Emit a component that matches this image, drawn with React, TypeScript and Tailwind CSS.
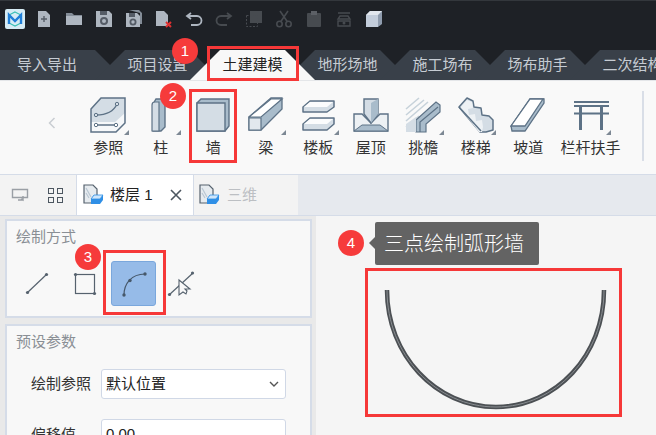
import React from "react";

const FONT = "font-['Liberation_Sans','Noto_Sans_CJK_SC',sans-serif]";

function Ico({ children, size = 18, vb = 18 }: { children: React.ReactNode; size?: number; vb?: number }) {
  return (
    <svg width={size} height={size} viewBox={`0 0 ${vb} ${vb}`} fill="none" className="shrink-0">
      {children}
    </svg>
  );
}

const c = "#aeb6c0";
const dim = "#474b50";

const toolbar: React.ReactNode[] = [
  <Ico key="n"><path d="M3 1h8l4 4v12H3z" fill={c} /><path d="M9 6v6M6 9h6" stroke="#555c66" strokeWidth="1.4" /></Ico>,
  <Ico key="o"><path d="M1 15V3h6l2 2h8v10z" fill="#838c97" /><path d="M1 15V6h16v9z" fill={c} /></Ico>,
  <Ico key="s"><path d="M1 1h13l3 3v13H1z" fill={c} /><rect x="5" y="1" width="7" height="4" fill="#555c66" /><circle cx="9" cy="11" r="3" stroke="#555c66" strokeWidth="2" /></Ico>,
  <Ico key="a"><path d="M4 0h10l3 3v11h-2V3z" fill="#838c97" /><path d="M1 3h11l3 3v11H1z" fill={c} /><rect x="4" y="3" width="6" height="4" fill="#555c66" /><circle cx="8" cy="12" r="2.6" stroke="#555c66" strokeWidth="1.8" /></Ico>,
  <Ico key="c"><path d="M1 1h8l4 4v11H1z" fill={c} /><path d="M11 12l5 5M16 12l-5 5" stroke="#e03030" strokeWidth="2" /></Ico>,
  <Ico key="u"><path d="M6 3L2 6l4 3" stroke={c} strokeWidth="1.8" /><path d="M3 6h9a4 4 0 010 9H6" stroke={c} strokeWidth="1.8" /></Ico>,
  <Ico key="r"><path d="M12 3l4 3-4 3" stroke={dim} strokeWidth="1.8" /><path d="M15 6H6a4 4 0 000 9h6" stroke={dim} strokeWidth="1.8" /></Ico>,
  <Ico key="l"><rect x="5" y="1" width="12" height="12" fill={dim} /><rect x="1.5" y="5.5" width="11" height="11" stroke={dim} strokeDasharray="2 1.5" /></Ico>,
  <Ico key="x"><circle cx="4.5" cy="14" r="2.7" stroke={dim} strokeWidth="1.6" /><circle cx="13.5" cy="14" r="2.7" stroke={dim} strokeWidth="1.6" /><path d="M5.5 12L13 1M12.5 12L5 1" stroke={dim} strokeWidth="1.6" /></Ico>,
  <Ico key="p"><rect x="2" y="3" width="14" height="14" rx="1" fill={dim} /><rect x="6" y="1" width="6" height="4" fill="#5c6066" /></Ico>,
  <Ico key="b"><path d="M3 3h12M5 6h8l2 3H3zM3 11h12v5H3z" stroke={dim} strokeWidth="1.4" /><circle cx="9" cy="13" r="1.5" fill={dim} /></Ico>,
  <Ico key="q"><path d="M1 5l4-4h12v13l-4 3H1z" fill="#8f9cae" /><path d="M1 5h12v12H1z" fill="#c3cddb" /><path d="M5 1h12l-4 4H1z" fill="#e2e7ee" /></Ico>,
];

const topTabs = ["项目设置", "土建建模", "地形场地", "施工场布", "场布助手", "二次结构"];

function Tab({ label, active, z }: { label: string; active?: boolean; z: number }) {
  return (
    <div
      style={{ zIndex: z }}
      className={`relative -ml-[30px] h-[30px] w-[125px] shrink-0 flex items-center justify-center text-[15px] [clip-path:polygon(30px_0,95px_0,125px_100%,0_100%)] ${
        active ? "bg-[#f8f8f8] text-[#222]" : "bg-[#394049] text-[#c6ccd3]"
      }`}
    >
      {label}
    </div>
  );
}

const S = "#5d7286";
const L = "#d4dde5";
const D = "#a9bccb";
const ribbon: { label: string; w?: string; arrow?: boolean; icon: React.ReactNode }[] = [
  {
    label: "参照",
    arrow: true,
    icon: (
      <Ico size={36} vb={36}>
        <path d="M1 12L11 1h24v25l-9 9H1z" fill={L} />
        <path d="M1 25h24l10-9v10l-9 9H1z" fill="#f6f8fa" />
        <path d="M6 18c8 0 17-2 21-11M6 28h20" stroke={S} strokeWidth="1.3" />
        <circle cx="6" cy="18" r="1.7" fill={L} stroke={S} /><circle cx="27" cy="7" r="1.7" fill={L} stroke={S} />
        <circle cx="6" cy="28" r="1.7" fill="#fff" stroke={S} /><circle cx="26" cy="28" r="1.7" fill="#fff" stroke={S} />
        <path d="M1 12L11 1h24v25l-9 9H1z" stroke={S} strokeWidth="1.5" />
      </Ico>
    ),
  },
  {
    label: "柱",
    arrow: true,
    icon: (
      <Ico size={36} vb={36}>
        <path d="M10 7l3-5h9v28l-4 4h-8z" fill={D} stroke={S} strokeWidth="1.4" />
        <path d="M9 8q0-3 3-3h4v29H9z" fill={L} stroke={S} strokeWidth="1.2" />
      </Ico>
    ),
  },
  {
    label: "墙",
    icon: (
      <Ico size={36} vb={36}>
        <path d="M2 6l4-4h28v27l-4 5H2z" fill={D} stroke={S} strokeWidth="1.4" />
        <path d="M2 6h28v28H2z" fill={L} stroke={S} strokeWidth="1.4" />
      </Ico>
    ),
  },
  {
    label: "梁",
    arrow: true,
    icon: (
      <Ico size={36} vb={36}>
        <path d="M1 20L23 1h11v11L13 33H1z" fill={D} stroke={S} strokeWidth="1.3" />
        <path d="M1 21h12v12H1z" fill="#e2e8ee" stroke={S} strokeWidth="1.2" />
        <path d="M1 20L23 2h11L13 20z" fill="#fff" stroke={S} strokeWidth="1.2" />
      </Ico>
    ),
  },
  {
    label: "楼板",
    arrow: true,
    icon: (
      <Ico size={36} vb={36}>
        <path d="M3 10l7-6h24v6l-7 5H3z" fill={L} stroke={S} strokeWidth="1.5" strokeLinejoin="round" />
        <path d="M4 10l6-5h23l-6 5z" fill="#fbfcfd" />
        <path d="M3 27l7-6h24v6l-7 6H3z" fill={L} stroke={S} strokeWidth="1.5" strokeLinejoin="round" />
        <path d="M4 27l6-5h23l-6 5z" fill="#fbfcfd" />
      </Ico>
    ),
  },
  {
    label: "屋顶",
    icon: (
      <Ico size={36} vb={36}>
        <path d="M1 17h8l9 9 9-9h8v17H1z" fill="#edf1f4" stroke={S} strokeWidth="1.4" />
        <path d="M1 34l8-6h18l8 6z" fill={D} stroke={S} strokeWidth="1" />
        <path d="M11 2h14v15l-7 9-7-9z" fill={L} stroke={S} strokeWidth="1.4" />
        <path d="M18 6v20l7-9V2z" fill={D} />
      </Ico>
    ),
  },
  {
    label: "挑檐",
    arrow: true,
    icon: (
      <Ico size={36} vb={36}>
        <path d="M1 12L14 1M1 18L19 3M1 24L23 5M1 30L14 19" stroke="#c7d2da" strokeWidth="1.6" />
        <path d="M11 35V23L31 5l4 3v7L21 27v8z" fill={D} stroke={S} strokeWidth="1.2" />
        <path d="M15 35V25l18-15" stroke={S} strokeWidth="1.2" />
        <path d="M1 35V27l10-7v15z" fill={L} />
      </Ico>
    ),
  },
  {
    label: "楼梯",
    arrow: true,
    icon: (
      <Ico size={36} vb={36}>
        <path d="M1 10L9 1l6 3 1 6 7 1 1 7 7 1 4 4v10l-7 2h-6z" fill={L} stroke={S} strokeWidth="1.5" strokeLinejoin="round" />
        <path d="M2 11l7-8 5 2 1 6-5 1 1 6 6-1 1 7 6-1 1 7-1 5h-3z" fill="#eef2f5" />
        <path d="M1 10l22 24" stroke={S} strokeWidth="1.5" />
      </Ico>
    ),
  },
  {
    label: "坡道",
    icon: (
      <Ico size={36} vb={36}>
        <path d="M1 29L20 2h14v4L15 34H2z" fill={D} stroke={S} strokeWidth="1.3" />
        <path d="M1 29L20 2h13L15 29z" fill="#fff" stroke={S} strokeWidth="1.3" />
      </Ico>
    ),
  },
  {
    label: "栏杆扶手",
    w: "w-[72px]",
    arrow: true,
    icon: (
      <Ico size={36} vb={36}>
        <path d="M1 5h35M1 9h35M1 16.5h35" stroke={S} strokeWidth="2" />
        <path d="M7.5 9v24M28.5 9v24" stroke={S} strokeWidth="3" />
      </Ico>
    ),
  },
];

function Badge({ n, className }: { n: number; className: string }) {
  return (
    <div className={`absolute z-30 flex h-[26px] w-[26px] items-center justify-center rounded-full bg-[#f63b3b] text-[15px] text-white ${className}`}>
      {n}
    </div>
  );
}

const box = "absolute z-20 border-[3px] border-[#f63838]";

function DocIcon() {
  return (
    <Ico size={22} vb={22}>
      <path d="M2 1h9l4 4v14H2z" fill="#e6ebef" stroke="#56626e" strokeWidth="1.2" />
      <path d="M4 4l5 9M4 9l3 5" stroke="#b9c6d2" strokeWidth="1.2" />
      <path d="M9 15l3-4h9v5l-3 4H9z" fill="#2f8fe6" />
      <path d="M9 15l3-4h9l-3 4z" fill="#cfe6fb" stroke="#2f8fe6" strokeWidth="0.8" />
    </Ico>
  );
}

export default function App() {
  return (
    <div className={`${FONT} relative flex h-[435px] w-[656px] flex-col overflow-hidden bg-[#f5f5f5]`}>
      {/* Title bar */}
      <div className="flex h-[50px] shrink-0 flex-col border-t border-t-[#33373c] bg-[#1e2126]">
        <div className="flex items-center pl-[5px] pt-[8px]">
          <svg width="20" height="20" viewBox="0 0 20 20" className="shrink-0">
            <rect width="20" height="20" rx="2" fill="#d6ecf5" />
            <path d="M10 3l6 3v8l-6 3-6-3V6z" fill="none" stroke="#39c0b5" strokeWidth="1.2" />
            <path d="M4 15V6l6 6 6-6v9" fill="none" stroke="#1f7fd8" strokeWidth="2.4" />
          </svg>
          <div className="ml-[10px] flex gap-[12px]">{toolbar}</div>
        </div>
      </div>

      {/* Main tabs */}
      <div className="flex h-[30px] shrink-0 overflow-hidden bg-[#1e2126]">
        <div
          style={{ zIndex: 1 }}
          className="relative flex h-[30px] w-[125px] shrink-0 items-center pl-[17px] text-[15px] text-[#c6ccd3] bg-[#394049] [clip-path:polygon(0_0,95px_0,125px_100%,0_100%)]"
        >
          导入导出
        </div>
        {topTabs.map((t, i) => (
          <Tab key={t} label={t} active={i === 1} z={i === 1 ? 10 : i + 2} />
        ))}
      </div>

      {/* Ribbon */}
      <div className="flex h-[94px] shrink-0 items-start border-t border-t-[#e4e6e9] bg-[#f9f9f9]">
        <div className="flex h-[70px] w-[82px] items-center justify-center pl-[22px] pt-[14px]">
          <svg width="8" height="12" viewBox="0 0 8 12" fill="none">
            <path d="M6.5 1L1.5 6l5 5" stroke="#c9cdd2" strokeWidth="1.5" />
          </svg>
        </div>
        <div className="flex pt-[16px]">
          {ribbon.map((r) => (
            <div key={r.label} className={`relative flex shrink-0 flex-col items-center ${r.w ?? "w-[52.5px]"}`}>
              <div className="h-[36px]">{r.icon}</div>
              <div className="mt-[5px] text-[15px] leading-[20px] text-[#333]">{r.label}</div>
              {r.arrow && (
                <div className={`absolute top-[33px] h-0 w-0 border-b-[5px] border-l-[5px] border-b-[#7d8894] border-l-transparent ${r.w ? "right-[16px]" : "right-[6px]"}`} />
              )}
            </div>
          ))}
        </div>
        <div className="ml-[15px] mt-[10px] h-[70px] w-[2px] bg-[#d9dee7]" />
      </div>

      {/* Doc tabs */}
      <div className="flex h-[42px] shrink-0 border-y border-y-[#d5dce8] bg-[#e6e9ee]">
        <div className="flex w-[76px] items-center bg-[#f3f3f3] pl-[11px]">
          <Ico size={18} vb={18}>
            <path d="M1.5 3.5h15v8h-15z" stroke="#9a9fa5" strokeWidth="1.4" />
            <path d="M7 14h5M12 10v4l-2-1" stroke="#9a9fa5" strokeWidth="1.4" />
          </Ico>
          <div className="ml-[19px] grid grid-cols-2 gap-[3px]">
            <div className="h-[6px] w-[6px] border-[1.5px] border-[#4c5660]" />
            <div className="h-[6px] w-[6px] border-[1.5px] border-[#4c5660]" />
            <div className="h-[6px] w-[6px] border-[1.5px] border-[#4c5660]" />
            <div className="h-[6px] w-[6px] border-[1.5px] border-[#4c5660]" />
          </div>
        </div>
        <div className="flex w-[118px] items-center border-x border-x-[#d5dce8] bg-white pl-[5px]">
          <DocIcon />
          <span className="ml-[6px] text-[15px] text-[#222]">楼层 1</span>
          <svg className="ml-[16px]" width="14" height="14" viewBox="0 0 14 14" fill="none">
            <path d="M2 2l10 10M12 2L2 12" stroke="#4c5660" strokeWidth="1.6" />
          </svg>
        </div>
        <div className="flex w-[104px] items-center bg-[#f3f3f3] pl-[4px]">
          <DocIcon />
          <span className="ml-[7px] text-[15px] text-[#bcbfc3]">三维</span>
        </div>
      </div>

      {/* Body */}
      <div className="flex min-h-0 flex-1">
        <div className="flex w-[316px] flex-col gap-[6px] overflow-hidden bg-[#e9e9e9] pl-[5px] pr-[4px] pt-[3px]">
          <div className="h-[99px] shrink-0 border-2 border-[#d5dce8] bg-[#f8f8f8] px-[9px] pt-[6px]">
            <div className="text-[15px] leading-[20px] text-[#8a8f95]">绘制方式</div>
            <div className="ml-[9px] mt-[14px] flex items-center">
              <svg width="24" height="24" viewBox="0 0 24 24" fill="none" className="mt-[1px]">
                <path d="M2 21L22 2" stroke="#56626e" strokeWidth="1.2" />
                <circle cx="2.5" cy="20.5" r="1.6" fill="#56626e" /><circle cx="21.5" cy="2.5" r="1.6" fill="#56626e" />
              </svg>
              <svg className="ml-[24px]" width="24" height="24" viewBox="0 0 24 24" fill="none">
                <rect x="2.5" y="2.5" width="19" height="19" stroke="#56626e" strokeWidth="1.2" />
                <circle cx="2.5" cy="2.5" r="1.6" fill="#56626e" /><circle cx="21.5" cy="21.5" r="1.6" fill="#56626e" />
              </svg>
              <div className="ml-[14px] flex h-[45px] w-[45px] items-center justify-center rounded-[3px] border border-[#7aa7dc] bg-[#96bbe8]">
                <svg width="26" height="26" viewBox="0 0 26 26" fill="none">
                  <path d="M3 24C3 13 10 3 24 3" stroke="#46586a" strokeWidth="1.2" />
                  <circle cx="3" cy="24" r="1.7" fill="#46586a" /><circle cx="9" cy="9.5" r="1.7" fill="#46586a" /><circle cx="24" cy="3" r="1.7" fill="#46586a" />
                </svg>
              </div>
              <svg className="ml-[11px]" width="28" height="28" viewBox="0 0 28 28" fill="none">
                <path d="M2 25L26 3" stroke="#56626e" strokeWidth="1.2" />
                <circle cx="2.5" cy="24.5" r="1.6" fill="#56626e" /><circle cx="25.5" cy="3" r="1.6" fill="#56626e" />
                <path d="M12 10v15l4-3 3 2 1-3-2-2h5z" fill="#f8f8f8" stroke="#56626e" strokeWidth="1.1" />
              </svg>
            </div>
          </div>
          <div className="flex-1 shrink-0 border-2 border-b-0 border-[#d5dce8] bg-[#f8f8f8] px-[9px] pt-[6px]">
            <div className="text-[15px] leading-[20px] text-[#8a8f95]">预设参数</div>
            <div className="mt-[17px] flex items-center pl-[15px]">
              <span className="w-[70px] text-[15px] text-[#333]">绘制参照</span>
              <div className="flex h-[30px] w-[185px] items-center justify-between rounded-[3px] border border-[#d0d8e6] bg-white pl-[4px] pr-[6px] text-[15px] text-[#222]">
                默认位置
                <svg width="10" height="6" viewBox="0 0 10 6" fill="none">
                  <path d="M1 1l4 4 4-4" stroke="#555" strokeWidth="1.4" />
                </svg>
              </div>
            </div>
            <div className="mt-[20px] flex items-start pl-[15px]">
              <span className="w-[70px] pt-[5px] text-[15px] text-[#333]">偏移值</span>
              <div className="flex h-[30px] w-[185px] items-center rounded-[3px] border border-[#d0d8e6] bg-white pl-[4px] text-[15px] text-[#222]">
                0.00
              </div>
            </div>
          </div>
        </div>
        <div className="relative flex-1 bg-[#f5f5f5]">
          <div className="absolute left-[59px] top-[6px] z-10 flex h-[43px] w-[164px] items-center rounded-[2px] bg-[#636363] pl-[9px] text-[20px] font-light text-white">
            <div className="absolute -left-[6px] top-[15px] h-0 w-0 border-y-[6px] border-r-[6px] border-y-transparent border-r-[#636363]" />
            三点绘制弧形墙
          </div>
          <svg className="absolute left-[60px] top-[64px]" width="240" height="140" viewBox="0 0 240 140" fill="none">
            <path d="M11 10C11 75 60 127 120 127C180 127 228 75 228 10" stroke="#4c5054" strokeWidth="4.5" />
            <path d="M11 10C11 75 60 127 120 127C180 127 228 75 228 10" stroke="#8a8e92" strokeWidth="1" />
          </svg>
        </div>
      </div>

      {/* Annotations */}
      <div className={`${box} left-[207px] top-[46px] h-[35px] w-[92px]`} />
      <div className={`${box} left-[189px] top-[89px] h-[74px] w-[48px]`} />
      <div className={`${box} left-[103px] top-[250px] h-[65px] w-[63px]`} />
      <div className={`${box} left-[365px] top-[268px] h-[149px] w-[257px]`} />
      <Badge n={1} className="left-[172px] top-[38px]" />
      <Badge n={2} className="left-[160px] top-[83px]" />
      <Badge n={3} className="left-[75px] top-[244px]" />
      <Badge n={4} className="left-[338px] top-[230px]" />
    </div>
  );
}
